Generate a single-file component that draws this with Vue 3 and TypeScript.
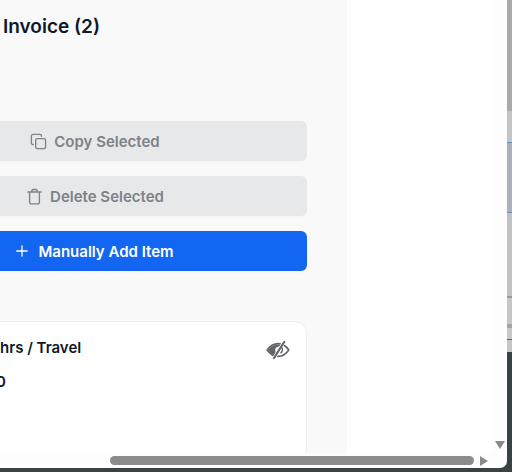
<script setup lang="ts">
const bands = [
  { h: 111, c: "#a9a9a9" },
  { h: 31, c: "#c4c4c4" },
  { h: 1, c: "#5f8fc4" },
  { h: 69, c: "#adb0bb" },
  { h: 1, c: "#5f8fc4" },
  { h: 83, c: "#c2c2c2" },
  { h: 2, c: "#9a9a9a" },
  { h: 26, c: "#c6c6c6" },
  { h: 4, c: "#a4a4a4" },
  { h: 11, c: "#c8c8c8" },
  { h: 1, c: "#5a5f62" },
  { h: 12, c: "#c6c6c6" },
];
</script>

<template>
  <main class="screen">
    <div class="window">
      <div class="viewport">
        <section class="panel">
          <h2 class="title">Invoice (2)</h2>
          <div class="actions">
            <button type="button" class="btn" disabled>
              <svg class="ic" viewBox="0 0 18 18" fill="none" stroke="currentColor" stroke-width="1.4" stroke-linejoin="round" stroke-linecap="round">
                <rect x="6" y="6" width="10.5" height="10.5" rx="1.8" />
                <path d="M3.5 12.2h-.4A1.6 1.6 0 0 1 1.5 10.6V3.1a1.6 1.6 0 0 1 1.6-1.6h7.5a1.6 1.6 0 0 1 1.6 1.6v.4" />
              </svg>
              Copy Selected
            </button>
            <button type="button" class="btn" disabled>
              <svg class="ic" viewBox="0 0 18 18" fill="none" stroke="currentColor" stroke-width="1.4" stroke-linejoin="round" stroke-linecap="round">
                <path d="M2 4.2h14M6.2 4V2.8a1.2 1.2 0 0 1 1.2-1.2h3.2a1.2 1.2 0 0 1 1.2 1.2V4M3.8 4.2v11a1.6 1.6 0 0 0 1.6 1.6h7.2a1.6 1.6 0 0 0 1.6-1.6v-11" />
              </svg>
              Delete Selected
            </button>
            <button type="button" class="btn primary">
              <svg class="ic plus" viewBox="0 0 12 12" fill="none" stroke="currentColor" stroke-width="1.3" stroke-linecap="round">
                <path d="M6 .8v10.4M.8 6h10.4" />
              </svg>
              Manually Add Item
            </button>
          </div>
          <article class="card">
            <div class="card-text">
              <div class="name">hrs / Travel</div>
              <div class="value">0</div>
            </div>
            <svg class="eye" viewBox="0 0 24 18">
              <path d="M1.200 9C4 4.800 8 2.600 12 2.600S20 4.800 22.800 9c-2.800 4.200-6.800 6.400-10.800 6.400S4 13.200 1.200 9Z" fill="none" stroke="#63676b" stroke-width="1.600" stroke-linejoin="round" />
              <path d="M2 9c2.400-3.500 6-5.600 10-5.600 1.200 0 2.300.2 3.400.5L8.300 14.300C5.800 13.400 3.700 11.500 2 9Z" fill="#63676b" />
              <path d="M10.200 6.400c1-.7 2.200-.9 3.200-.6l-3.500 5.600c-1-1.700-.8-3.800.3-5Z" fill="#fff" />
              <path d="M18 .8 8 17.200" stroke="#fff" stroke-width="3.400" />
              <path d="M18.200 1 8 17" stroke="#63676b" stroke-width="2.200" stroke-linecap="round" />
              <path d="M15.800 6.500c1.200 1.800.7 4.400-1.300 5.600" fill="none" stroke="#63676b" stroke-width="1.400" />
            </svg>
          </article>
        </section>
        <div class="blank"></div>
        <div class="vscroll"><span class="arrow-down"></span></div>
      </div>
      <div class="hscroll">
        <span class="thumb"></span>
        <span class="arrow-right"></span>
      </div>
    </div>
    <div class="strip">
      <div v-for="(b, i) in bands" :key="i" :style="{ height: b.h + 'px', background: b.c }"></div>
    </div>
  </main>
</template>

<style scoped>
.screen {
  display: flex;
  align-items: flex-start;
  width: 512px;
  height: 472px;
  overflow: hidden;
  background: #3a4245;
  font-family: Inter, "Liberation Sans", sans-serif;
}
.window {
  display: flex;
  flex-direction: column;
  flex: none;
  width: 507px;
  height: 468px;
  overflow: hidden;
  background: #fdfdfd;
  border-bottom-right-radius: 7px;
}
.viewport {
  display: flex;
  height: 453px;
}
.panel {
  flex: none;
  width: 347px;
  overflow: hidden;
  background: #f9f9f9;
  padding-top: 16px;
  box-sizing: border-box;
}
.title {
  margin: 0 0 0 3px;
  font-size: 19px;
  line-height: 22px;
  font-weight: 600;
  color: #0f172a;
}
.actions {
  display: flex;
  flex-direction: column;
  gap: 15px;
  width: 424px;
  margin: 83px 0 0 -117px;
}
.btn {
  display: flex;
  align-items: center;
  justify-content: center;
  gap: 7px;
  height: 40px;
  padding-bottom: 1px;
  border: 0;
  border-radius: 6px;
  background: #e7e8ea;
  color: #7d8287;
  font: 600 15px Inter, "Liberation Sans", sans-serif;
  box-shadow: 0 1px 3px rgba(0, 0, 0, 0.02);
}
.primary {
  gap: 10px;
  background: #1266f1;
  color: #fff;
}
.ic {
  width: 17px;
  height: 17px;
}
.plus {
  width: 12px;
  height: 12px;
}
.card {
  display: flex;
  justify-content: space-between;
  width: 424px;
  height: 200px;
  margin: 50px 0 0 -117px;
  padding: 17px 16px 0 108px;
  box-sizing: border-box;
  background: #fff;
  border: 1px solid #eeeeee;
  border-radius: 12px;
}
.name {
  margin-left: 8px;
  font-size: 15px;
  line-height: 18px;
  font-weight: 600;
  color: #0f172a;
}
.value {
  margin: 16px 0 0 4px;
  font-size: 15px;
  line-height: 18px;
  font-weight: 600;
  color: #0f172a;
}
.eye {
  width: 24px;
  height: 18px;
  margin-top: 2px;
}
.blank {
  flex: 1;
  background: #fff;
}
.vscroll {
  display: flex;
  flex: none;
  align-items: flex-end;
  justify-content: center;
  width: 15px;
  padding-bottom: 4px;
  box-sizing: border-box;
  background: #fdfdfd;
}
.arrow-down {
  border-left: 5px solid transparent;
  border-right: 5px solid transparent;
  border-top: 8px solid #8a8a8a;
}
.hscroll {
  display: flex;
  align-items: center;
  flex: 1;
  padding-left: 110px;
}
.thumb {
  width: 364px;
  height: 9px;
  border-radius: 5px;
  background: #8c8c8c;
}
.arrow-right {
  margin-left: 6px;
  border-top: 5px solid transparent;
  border-bottom: 5px solid transparent;
  border-left: 8px solid #8a8a8a;
}
.strip {
  flex: 1;
}
</style>

<style>
html,
body {
  overflow: hidden;
}
</style>
